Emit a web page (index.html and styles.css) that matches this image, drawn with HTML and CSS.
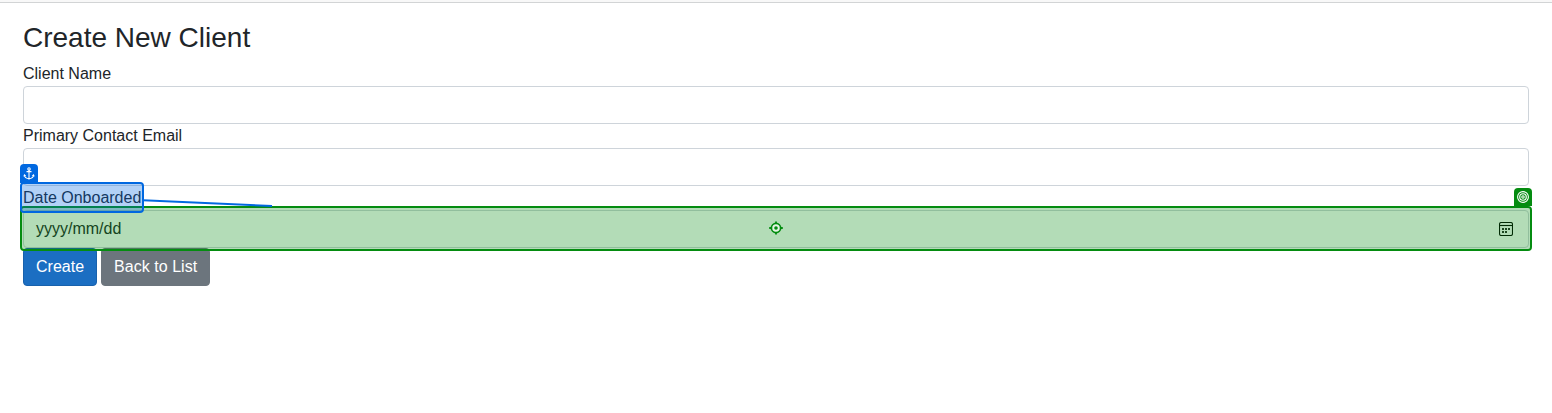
FILE: index.html
```html
<!DOCTYPE html>
<html lang="en">
<head>
<meta charset="utf-8">
<title>Create New Client</title>
<link rel="stylesheet" href="styles.css">
</head>
<body>
<div class="topbar"></div>
<main class="page">
  <h1 class="title">Create New Client</h1>
  <form class="form">
    <label class="label">Client Name</label>
    <div class="input"></div>
    <label class="label">Primary Contact Email</label>
    <div class="input"></div>
    <label class="label">Date Onboarded</label>
    <div class="input date">
      <span>yyyy/mm/dd</span>
      <svg class="calendar" width="14" height="14" viewBox="0 0 14 14">
        <rect x=".5" y=".5" width="13" height="13" rx="1.8" fill="none" stroke="#000" stroke-width="1.1"/>
        <path d="M1 3.5h12" stroke="#000" stroke-width="1.1"/>
        <path d="M3 6h2v2H3zM6 6h2v2H6zM9 6h2v2H9zM3 9h2v2H3zM6 9h2v2H6z" fill="#000" fill-opacity=".85"/>
      </svg>
    </div>
    <div class="actions">
      <span class="btn primary">Create</span>
      <span class="btn secondary">Back to List</span>
    </div>
  </form>
</main>
<div class="target-box">
  <svg class="crosshair" width="14" height="14" viewBox="0 0 14 14">
    <circle cx="7" cy="7" r="4.6" fill="#e5f4e4" stroke="#048c10" stroke-width="1.7"/>
    <circle cx="7" cy="7" r="1.8" fill="#048c10"/>
    <path d="M7 .4v2.2M7 11.4v2.2M.2 7h2.4M11.4 7h2.4" stroke="#048c10" stroke-width="1.8"/>
  </svg>
</div>
<div class="tag target-tag">
  <svg width="12" height="12" viewBox="0 0 12 12" fill="none" stroke="#fff" stroke-width="1.1">
    <circle cx="6" cy="6" r="5.4"/><circle cx="6" cy="6" r="3.3"/><circle cx="6" cy="6" r="1.2"/>
  </svg>
</div>
<svg class="connector" width="132" height="10" viewBox="0 0 132 10"><path d="M1 2.2L130 8" stroke="#0068e0" stroke-width="2"/></svg>
<div class="anchor-box"></div>
<div class="tag anchor-tag">
  <svg width="12" height="13" viewBox="0 0 12 13" fill="none" stroke="#fff" stroke-width="1.1">
    <circle cx="6" cy="1.9" r="1.2"/>
    <path d="M6 3v9M3.5 4.6h5M1.3 8Q1.8 11.4 6 11.8Q10.2 11.4 10.7 8"/>
    <path d="M.4 9.5L1.2 7l2 1.7zM11.6 9.5L10.8 7l-2 1.7zM4.7 11.3L6 12.8l1.3-1.5z" fill="#fff" stroke="none"/>
  </svg>
</div>
</body>
</html>
```
FILE: styles.css
```css
* { box-sizing: border-box; }
body {
  margin: 0;
  height: 413px;
  overflow: hidden;
  position: relative;
  background: #fff;
  color: #212529;
  font: 16px/24px "Liberation Sans", Arial, sans-serif;
}
.topbar {
  height: 3px;
  background: #f8f8f8;
  border-bottom: 1px solid #d2d4d5;
}
.page { padding: 18px 23px 0; }
.title {
  margin: 0;
  height: 41px;
  font-size: 28px;
  font-weight: 400;
  line-height: 33px;
}
.form { display: flex; flex-direction: column; }
.label { height: 24px; }
.input {
  height: 38px;
  border: 1px solid #ced4da;
  border-radius: 4px;
  background: #fff;
}
.date {
  display: flex;
  align-items: center;
  justify-content: space-between;
  padding: 0 15px 0 12px;
}
.actions { display: flex; gap: 4px; }
.btn {
  height: 38px;
  padding: 6px 12px;
  border: 1px solid;
  border-radius: 4px;
  color: #fff;
}
.primary { background: #1b6ec2; border-color: #1861ac; }
.secondary { background: #6c757d; border-color: #6c757d; letter-spacing: .04px; }
.target-box {
  position: absolute;
  left: 20px;
  top: 206px;
  width: 1512px;
  height: 45px;
  border: 2px solid #048c10;
  border-radius: 4px;
  background: rgba(4, 140, 16, .3);
  background-clip: padding-box;
  display: flex;
  align-items: center;
  justify-content: center;
  padding-bottom: 1px;
}
.crosshair { display: block; }
.tag {
  position: absolute;
  width: 18px;
  display: flex;
  justify-content: center;
  align-items: center;
  border-radius: 4px 4px 0 0;
}
.target-tag { left: 1514px; top: 188px; height: 18px; background: #048c10; }
.connector { position: absolute; left: 142px; top: 198px; }
.anchor-box {
  position: absolute;
  left: 20px;
  top: 182px;
  width: 124px;
  height: 31px;
  border: 2px solid #0068e0;
  border-radius: 4px;
  background: rgba(0, 104, 224, .3);
  background-clip: padding-box;
}
.anchor-tag { left: 20px; top: 164px; height: 19px; background: #0068e0; }
```
